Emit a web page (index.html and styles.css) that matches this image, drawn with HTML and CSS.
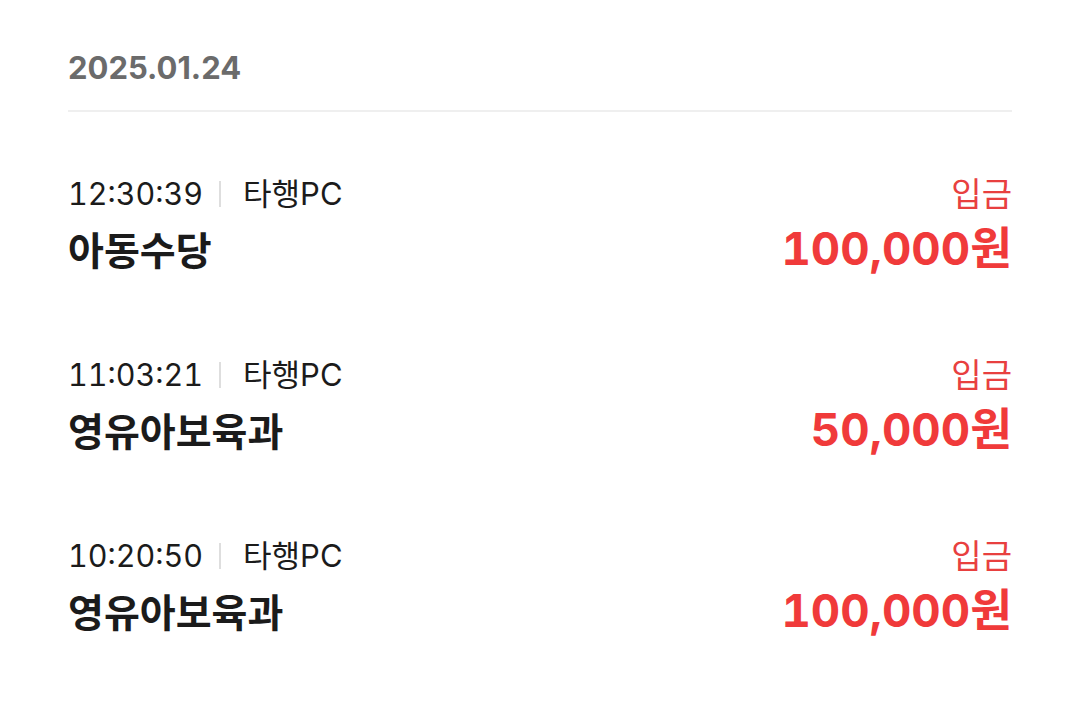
FILE: index.html
```html
<!DOCTYPE html>
<html lang="ko">
<head>
<meta charset="utf-8">
<link rel="stylesheet" href="styles.css">
</head>
<body>
<div class="page">
  <div class="date">2025.01.24</div>
  <div class="divider"></div>
  <ul class="list">
    <li class="row">
      <div class="left">
        <div class="meta"><span class="time">12:30:39</span><span class="sep"></span><span class="via">타행PC</span></div>
        <div class="name">아동수당</div>
      </div>
      <div class="right">
        <div class="type">입금</div>
        <div class="amount">100,000원</div>
      </div>
    </li>
    <li class="row">
      <div class="left">
        <div class="meta"><span class="time">11:03:21</span><span class="sep"></span><span class="via">타행PC</span></div>
        <div class="name">영유아보육과</div>
      </div>
      <div class="right">
        <div class="type">입금</div>
        <div class="amount">50,000원</div>
      </div>
    </li>
    <li class="row">
      <div class="left">
        <div class="meta"><span class="time">10:20:50</span><span class="sep"></span><span class="via">타행PC</span></div>
        <div class="name">영유아보육과</div>
      </div>
      <div class="right">
        <div class="type">입금</div>
        <div class="amount">100,000원</div>
      </div>
    </li>
  </ul>
</div>
</body>
</html>
```
FILE: styles.css
```css
* { box-sizing: border-box; }
html, body { margin: 0; padding: 0; background: #fff; }
body {
  font-family: Inter, "Noto Sans CJK KR", sans-serif;
  color: #1b1b1b;
}
.page {
  padding: 43px 68px 0 68px;
}
.date {
  font-size: 31px;
  font-weight: 700;
  color: #6b6b6b;
  line-height: 50px;
}
.divider {
  height: 2px;
  background: #efefef;
  margin-top: 17px;
}
.list {
  list-style: none;
  margin: 0;
  padding: 0;
  margin-top: 60px;
}
.row {
  display: flex;
  justify-content: space-between;
  align-items: flex-start;
  height: 181px;
}
.meta {
  display: flex;
  align-items: center;
  font-size: 31px;
  line-height: 44px;
  color: #1b1b1b;
}
.time {
  font-size: 30.5px;
  font-variant-numeric: tabular-nums;
}
.sep {
  display: inline-block;
  width: 2px;
  height: 26px;
  background: #dedede;
  margin: 0 22px 0 16px;
}
.name {
  font-size: 39px;
  font-weight: 700;
  line-height: 50px;
  margin-top: 10px;
}
.right {
  display: flex;
  flex-direction: column;
  align-items: flex-end;
}
.type {
  font-size: 33px;
  line-height: 44px;
  color: #e8403f;
}
.amount {
  font-size: 45.5px;
  font-weight: 700;
  line-height: 60px;
  color: #f03a3a;
  margin-top: 3px;
  font-variant-numeric: tabular-nums;
}
```
